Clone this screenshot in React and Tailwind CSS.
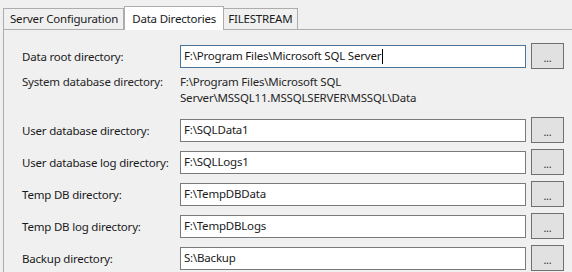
import React from 'react';

const rows = [
    { label: 'User database directory:', value: 'F:\\SQLData1' },
    { label: 'User database log directory:', value: 'F:\\SQLLogs1' },
    { label: 'Temp DB directory:', value: 'F:\\TempDBData' },
    { label: 'Temp DB log directory:', value: 'F:\\TempDBLogs' },
    { label: 'Backup directory:', value: 'S:\\Backup' },
];

function Browse() {
    return (
        <button className="w-[33px] h-[26px] shrink-0 border border-[#707070] bg-[#e1e1e1] flex items-center justify-center pt-[3px] text-[11px] text-[#333] leading-none">
            ...
        </button>
    );
}

function Row({ label, value, focused }) {
    return (
        <div className="flex items-center h-[26px]">
            <div className="w-[158px] shrink-0 whitespace-nowrap pt-[2px]">{label}</div>
            <div
                className={
                    'w-[346px] h-[23px] shrink-0 bg-white flex items-center px-[3px] border whitespace-nowrap ' +
                    (focused ? 'border-[#4a7396]' : 'border-[#7a7a7a]')
                }
            >
                {value}
                {focused && <span className="w-px h-[15px] bg-black ml-px"></span>}
            </div>
            <div className="ml-[5px]">
                <Browse />
            </div>
        </div>
    );
}

export default function App() {
    return (
        <div
            className="w-[572px] h-[272px] overflow-hidden bg-[#f0f0f0] text-[11.5px] tracking-[-0.2px] text-[#1a1a1a] leading-[16px]"
            style={{ fontFamily: '"Noto Sans", "Segoe UI", sans-serif' }}
        >
            {/* tab strip */}
            <div className="flex items-end h-[29px] pl-[3px] whitespace-nowrap">
                <div className="h-[21px] pl-[6px] pr-[5px] border border-b-0 border-[#adadad] flex items-center">
                    Server Configuration
                </div>
                <div className="h-[24px] px-[7px] -mb-px border border-b-0 border-[#adadad] bg-white flex items-center relative z-10">
                    Data Directories
                </div>
                <div className="h-[21px] px-[4px] border border-b-0 border-l-0 border-[#adadad] flex items-center">
                    FILESTREAM
                </div>
            </div>

            {/* tab page */}
            <div className="ml-[3px] h-[243px] border-l border-t border-[#adadad] pl-[18px] pt-[13px]">
                <Row label="Data root directory:" value="F:\Program Files\Microsoft SQL Server" focused />

                <div className="flex mt-[5px] h-[32px] text-[#262626]">
                    <div className="w-[158px] shrink-0 whitespace-nowrap">System database directory:</div>
                    <div className="w-[346px] whitespace-nowrap">
                        F:\Program Files\Microsoft SQL
                        <br />
                        Server\MSSQL11.MSSQLSERVER\MSSQL\Data
                    </div>
                </div>

                <div className="flex flex-col gap-[6px] mt-[11px]">
                    {rows.map((r) => (
                        <Row key={r.label} label={r.label} value={r.value} />
                    ))}
                </div>
            </div>
        </div>
    );
}
